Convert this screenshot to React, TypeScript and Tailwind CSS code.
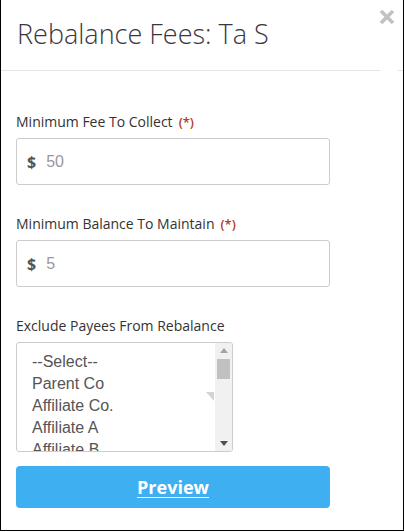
import React from "react";

// Rebalance fees modal
const options = ["--Select--", "Parent Co", "Affiliate Co.", "Affiliate A", "Affiliate B", "Affiliate C"];

function Label({ text, required }: { text: string; required?: boolean }) {
  return (
    <div className="h-[20px] leading-[20px] text-[14px] text-[#333333] font-['Open_Sans',sans-serif]">
      {text}
      {required && <span className="ml-[6px] text-[13px] font-semibold text-[#b33a26]">(*)</span>}
    </div>
  );
}

function MoneyInput({ value }: { value: string }) {
  return (
    <div className="mt-[6px] flex h-[47px] w-[314px] items-center rounded-[3px] border border-[#cccccc] bg-white pl-[10px]">
      <span className="font-['Open_Sans',sans-serif] text-[16px] font-bold text-[#555555]">$</span>
      <span className="ml-[10px] font-['Liberation_Sans',Arial,sans-serif] text-[16px] text-[#999999]">{value}</span>
    </div>
  );
}

export default function App() {
  return (
    <div className="relative h-[532px] w-[405px] overflow-hidden bg-white">
      <div className="flex h-[531px] w-[404px] flex-col border-b border-l border-r border-black">
        {/* header */}
        <div className="relative pt-[17px] pb-[19px] pl-[16px]">
          <h1 className="h-[34px] leading-[34px] text-[27px] font-light text-[#3c3540] font-['Open_Sans',sans-serif]">
            Rebalance Fees: Ta S
          </h1>
          <button className="absolute right-[8px] top-[9px]">
            <svg width="16" height="16" viewBox="0 0 16 16">
              <path d="M2 2 L14 14 M14 2 L2 14" stroke="#c2c2c2" strokeWidth="3.6" strokeLinecap="butt" />
            </svg>
          </button>
        </div>
        <div className="flex">
          <div className="h-px w-[380px] bg-[#e5e5e5]" />
          <div className="ml-[18px] h-px w-[5px] bg-[#e5e5e5]" />
        </div>

        {/* body */}
        <div className="flex flex-col pl-[15px] pt-[41px]">
          <Label text="Minimum Fee To Collect" required />
          <MoneyInput value="50" />

          <div className="mt-[29px]">
            <Label text="Minimum Balance To Maintain" required />
          </div>
          <MoneyInput value="5" />

          <div className="mt-[29px]">
            <Label text="Exclude Payees From Rebalance" />
          </div>
          <div className="relative mt-[6px] h-[110px] w-[217px] overflow-hidden rounded-[3px] border border-[#cccccc] bg-white">
            <div className="pl-[15px] pt-[8px] font-['Liberation_Sans',Arial,sans-serif] text-[16px] text-[#555555]">
              {options.map((o) => (
                <div key={o} className="h-[22px] leading-[22px]">
                  {o}
                </div>
              ))}
            </div>
            <svg className="absolute left-[189px] top-[49px]" width="8" height="9" viewBox="0 0 8 9">
              <path d="M0 0 L8 0 L8 9 Z" fill="#d4d4d4" />
            </svg>
            {/* scrollbar */}
            <div className="absolute right-0 top-0 flex h-full w-[17px] flex-col items-center bg-[#f1f1f1]">
              <svg className="mt-[5px]" width="8" height="5" viewBox="0 0 8 5">
                <path d="M0 5 L4 0 L8 5 Z" fill="#a3a3a3" />
              </svg>
              <div className="mt-[6px] h-[20px] w-[13px] bg-[#c1c1c1]" />
              <div className="flex-1" />
              <svg className="mb-[5px]" width="8" height="5" viewBox="0 0 8 5">
                <path d="M0 0 L8 0 L4 5 Z" fill="#505050" />
              </svg>
            </div>
          </div>

          <button className="mt-[14px] h-[42px] w-[314px] rounded-[4px] bg-[#3eaff0] font-['Open_Sans',sans-serif] text-[18px] font-bold text-white underline underline-offset-[3px]">
            Preview
          </button>
        </div>
      </div>
    </div>
  );
}
